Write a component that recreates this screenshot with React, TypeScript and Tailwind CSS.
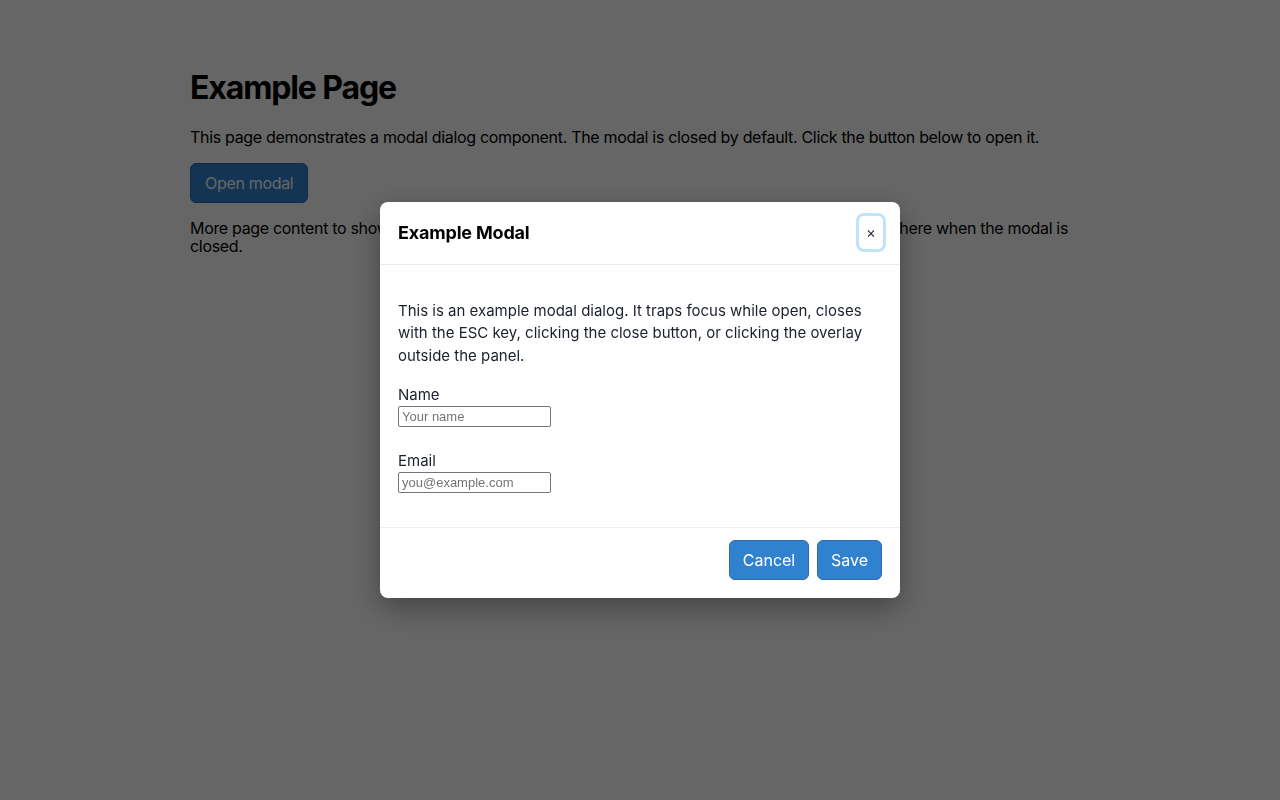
import React from "react";

export default function App() {
  return (
    <div className="relative min-h-[800px] bg-white text-black" style={{ fontFamily: "Inter, 'Noto Sans', sans-serif" }}>
      <div className="mx-auto w-[900px] pt-[68px]">
        <h1 className="text-[32px] font-bold leading-[39px] tracking-[-0.035em]">Example Page</h1>
        <p className="mt-[21px] text-[16px] leading-[19px] tracking-[-0.02em]">
          This page demonstrates a modal dialog component. The modal is closed by default. Click the button below to open it.
        </p>
        <button className="mt-[16px] h-10 rounded-[6px] border border-[#2b6cb0] bg-[#3182ce] px-[14px] text-[16px] tracking-[-0.02em] text-white">
          Open modal
        </button>
        <p className="mt-[16px] text-[16px] leading-[18px] tracking-[-0.02em]">
          More page content to show that the overlay dims the page behind the open dialog. The content is here when the modal is closed.
        </p>
      </div>

      <div className="fixed inset-0 flex items-center justify-center bg-black/60">
        <div className="w-[520px] rounded-[8px] bg-white shadow-[0_10px_30px_rgba(0,0,0,0.35)]">
          <div className="flex h-[63px] items-center justify-between border-b border-[#e6e9ee] pl-[18px] pr-[14px]">
            <h2 className="text-[18px] font-bold tracking-[-0.01em] text-black">Example Modal</h2>
            <button className="flex h-[39px] w-[30px] items-center justify-center rounded-[8px] border-[3px] border-[#bfe3fc] text-[15px] text-[#2d3748]">
              ×
            </button>
          </div>
          <div className="px-[18px] pb-[34px] pt-[35px] text-[15px] text-[#1a202c]">
            <p className="leading-[22.5px]">
              This is an example modal dialog. It traps focus while open, closes with the ESC key, clicking the close button, or clicking the overlay outside the panel.
            </p>
            <label className="mt-[17px] block leading-[22px]">Name</label>
            <input
              placeholder="Your name"
              className="block h-[21px] w-[153px] border border-[#767676] px-[3px] text-[13px] text-black placeholder:text-[#757575]"
              style={{ fontFamily: "'Liberation Sans', Arial, sans-serif", borderRadius: 2 }}
            />
            <label className="mt-[23px] block leading-[22px]">Email</label>
            <input
              placeholder="you@example.com"
              className="block h-[21px] w-[153px] border border-[#767676] px-[3px] text-[13px] text-black placeholder:text-[#757575]"
              style={{ fontFamily: "'Liberation Sans', Arial, sans-serif", borderRadius: 2 }}
            />
          </div>
          <div className="flex justify-end gap-2 border-t border-[#eef0f3] px-[18px] pb-[18px] pt-[12px]">
            <button className="h-10 w-[80px] rounded-[6px] border border-[#2b6cb0] bg-[#3182ce] text-[16px] text-white">
              Cancel
            </button>
            <button className="h-10 w-[65px] rounded-[6px] border border-[#2b6cb0] bg-[#3182ce] text-[16px] text-white">
              Save
            </button>
          </div>
        </div>
      </div>
    </div>
  );
}
